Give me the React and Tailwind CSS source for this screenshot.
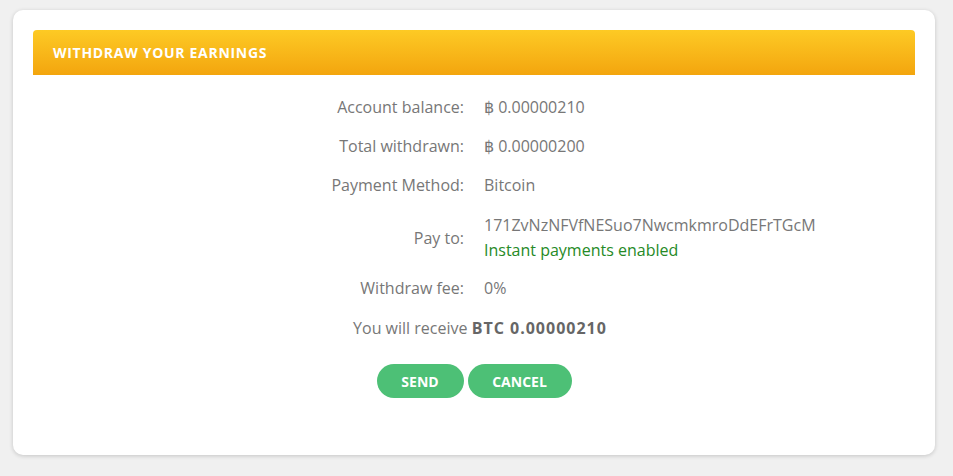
export default function App() {
  const rows = [
    ["Account balance:", "฿ 0.00000210"],
    ["Total withdrawn:", "฿ 0.00000200"],
    ["Payment Method:", "Bitcoin"],
  ];

  return (
    <main className="min-h-screen w-full bg-[#f0f0f0] pt-[10px] pl-[13px] pr-[18px] pb-[20px]">
      <div className="h-[445px] w-[922px] rounded-[10px] bg-white px-5 pt-5 shadow-[0_1px_4px_rgba(0,0,0,0.18)]">
        <div className="flex h-[45px] items-center rounded-t-[4px] bg-gradient-to-b from-[#fdca24] to-[#f3a50d] px-5">
          <h1 className="font-['Open_Sans',sans-serif] text-[14px] font-bold tracking-[0.7px] text-white">
            WITHDRAW YOUR EARNINGS
          </h1>
        </div>

        <div className="font-['Open_Sans',sans-serif] text-[16px] text-[#777]">
          <div className="mt-[21px] flex flex-col gap-[17px]">
            {rows.map(([label, value]) => (
              <div key={label} className="flex h-[22px] items-center">
                <div className="w-[431px] text-right">{label}</div>
                <div className="pl-[20px]">{value}</div>
              </div>
            ))}
            <div className="-mb-[3px] flex items-center">
              <div className="w-[431px] text-right">Pay to:</div>
              <div className="pl-[20px] leading-[25px]">
                <div>171ZvNzNFVfNESuo7NwcmkmroDdEFrTGcM</div>
                <div className="text-[#268a26]">Instant payments enabled</div>
              </div>
            </div>
            <div className="flex h-[22px] items-center">
              <div className="w-[431px] text-right">Withdraw fee:</div>
              <div className="pl-[20px]">0%</div>
            </div>
            <div className="mt-[1px] flex h-[22px] items-center justify-center pl-[12px]">
              <span>
                You will receive{" "}
                <b className="tracking-[1px] text-[#666]">BTC 0.00000210</b>
              </span>
            </div>
          </div>

          <div className="mt-[25px] flex justify-center gap-1">
            <button className="h-[34px] w-[87px] rounded-full bg-[#4dc076] text-[14px] font-bold text-white">
              SEND
            </button>
            <button className="h-[34px] w-[104px] rounded-full bg-[#4dc076] text-[14px] font-bold text-white">
              CANCEL
            </button>
          </div>
        </div>
      </div>
    </main>
  );
}
